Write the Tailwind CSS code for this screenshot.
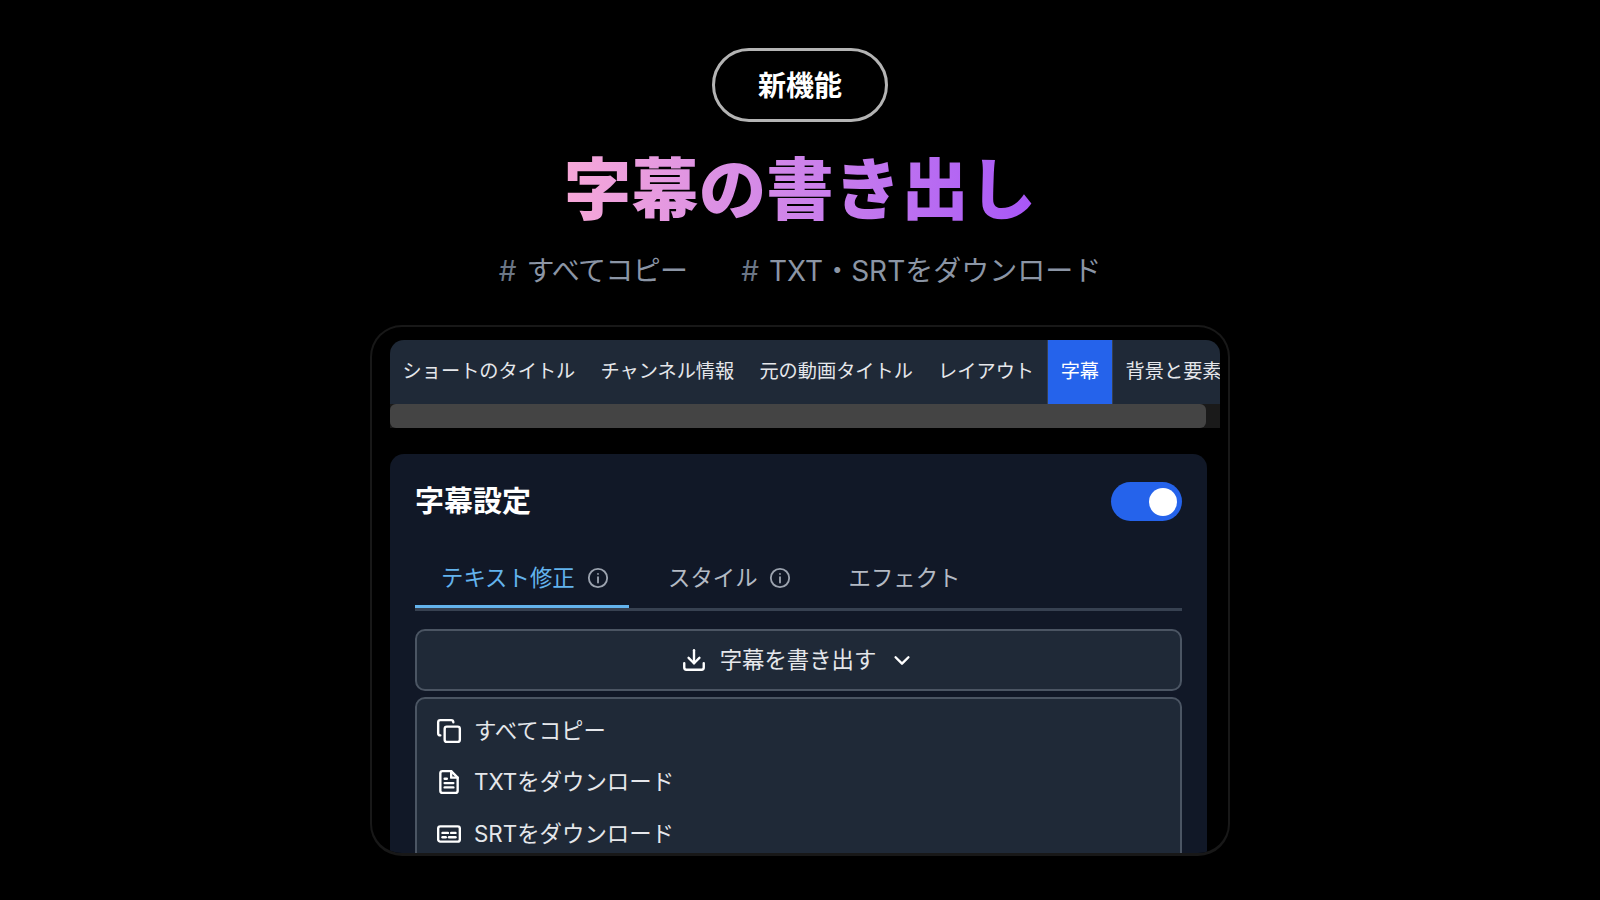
<!DOCTYPE html>
<html lang="ja">
<head>
    <meta charset="UTF-8">
    <title>字幕の書き出し</title>
    <script src="https://cdn.jsdelivr.net/npm/@tailwindcss/browser@4"></script>
</head>
<body class="bg-black">
    <div class="h-[900px] overflow-hidden flex flex-col items-center pt-[48px] font-['Inter','Noto_Sans_CJK_JP',sans-serif]">
        <!-- 見出し -->
        <div class="w-[176px] h-[74px] pt-[2px] rounded-full border-[3px] border-[#b4b4b4] flex items-center justify-center text-white text-[28px] font-bold">新機能</div>
        <h1 class="mt-[18px] h-[100px] leading-[100px] text-[67.5px] font-extrabold text-transparent bg-clip-text bg-gradient-to-r from-[#f7a8d8] to-[#a855f7]">字幕の書き出し</h1>
        <div class="mt-[9px] h-[44px] flex items-center gap-[54px] text-[28px] text-[#8b95a5]">
            <span><span class="text-[#6b7686] mr-[10px]">#</span><span class="tracking-[-0.7px]">すべてコピー</span></span>
            <span><span class="text-[#6b7686] mr-[10px]">#</span>TXT・SRTをダウンロード</span>
        </div>

        <!-- 端末フレーム -->
        <div class="mt-[32px] w-[860px] h-[531px] shrink-0 overflow-hidden rounded-[32px] border-2 border-b-[3px] border-[#181818] pt-[13px] pl-[18px] pr-[8px]">
            <div class="h-[64px] bg-[#1f2937] rounded-t-[14px] overflow-hidden flex text-[19.2px] text-[#e5e7eb] whitespace-nowrap">
                <div class="px-[12.6px] pb-[2px] flex items-center">ショートのタイトル</div>
                <div class="px-[12.6px] pb-[2px] flex items-center">チャンネル情報</div>
                <div class="px-[12.6px] pb-[2px] flex items-center">元の動画タイトル</div>
                <div class="px-[12.6px] pb-[2px] flex items-center">レイアウト</div>
                <div class="px-[13px] pb-[2px] flex items-center bg-[#2563eb] text-white border-x border-[#374151]">字幕</div>
                <div class="px-[12.6px] pb-[2px] flex items-center">背景と要素</div>
            </div>
            <div class="h-[24px] bg-[#1a1a1a]">
                <div class="w-[816px] h-full bg-[#444444] rounded-[6px]"></div>
            </div>

            <!-- 字幕設定カード -->
            <div class="mt-[26px] w-[817px] h-[500px] bg-[#111827] rounded-[14px] px-[25px] pt-[28px]">
                <div class="flex items-center justify-between h-[39px]">
                    <h2 class="text-[29px] font-bold text-white">字幕設定</h2>
                    <div class="w-[71px] h-[39px] rounded-full bg-[#2563eb] flex items-center justify-end pr-[5px]">
                        <div class="w-[28px] h-[28px] rounded-full bg-white"></div>
                    </div>
                </div>

                <div class="mt-[24px] h-[66px] flex items-stretch border-b-[3px] border-[#374151] text-[22.4px] text-[#b4bac4]">
                    <div class="w-[214px] pl-[26px] pt-[5px] flex items-center gap-[12px] border-b-[3px] border-[#63b3ed] text-[#63b3ed]">
                        <span>テキスト修正</span>
                        <svg class="w-[22px] h-[22px] text-[#9ca3af]" viewBox="0 0 24 24" fill="none" stroke="currentColor" stroke-width="2" stroke-linecap="round"><circle cx="12" cy="12" r="10"/><path d="M12 11v6"/><path d="M12 7.5v.01"/></svg>
                    </div>
                    <div class="ml-[39px] flex items-center gap-[11px] pt-[5px] pb-[3px]">
                        <span>スタイル</span>
                        <svg class="w-[22px] h-[22px] text-[#9ca3af]" viewBox="0 0 24 24" fill="none" stroke="currentColor" stroke-width="2" stroke-linecap="round"><circle cx="12" cy="12" r="10"/><path d="M12 11v6"/><path d="M12 7.5v.01"/></svg>
                    </div>
                    <div class="ml-[58px] flex items-center pt-[5px] pb-[3px]">エフェクト</div>
                </div>

                <div class="mt-[18px] h-[62px] pr-[3px] bg-[#1f2937] border-2 border-[#4b5563] rounded-[10px] flex items-center justify-center text-[22.4px] text-[#e5e7eb]">
                    <svg class="w-[26px] h-[26px] text-white mr-[13px]" viewBox="0 0 24 24" fill="none" stroke="currentColor" stroke-width="2.2" stroke-linecap="round" stroke-linejoin="round"><path d="M12 3v12"/><path d="M7 10l5 5 5-5"/><path d="M3 15v4a2 2 0 0 0 2 2h14a2 2 0 0 0 2-2v-4"/></svg>
                    <span>字幕を書き出す</span>
                    <svg class="w-[22px] h-[22px] text-white ml-[15px]" viewBox="0 0 24 24" fill="none" stroke="currentColor" stroke-width="2.6" stroke-linecap="round" stroke-linejoin="round"><path d="M5 9l7 7 7-7"/></svg>
                </div>

                <div class="mt-[6px] h-[300px] bg-[#1f2937] border-2 border-[#4b5563] rounded-[10px] pt-[6px] pl-[19px] text-[22.4px] text-[#e5e7eb]">
                    <div class="h-[51.5px] flex items-center gap-[12px]">
                        <svg class="w-[26px] h-[26px] text-white" viewBox="0 0 24 24" fill="none" stroke="currentColor" stroke-width="2.2" stroke-linecap="round" stroke-linejoin="round"><rect x="8" y="8" width="14" height="14" rx="2"/><path d="M4 16c-1.1 0-2-.9-2-2V4c0-1.1.9-2 2-2h10c1.1 0 2 .9 2 2"/></svg>
                        <span>すべてコピー</span>
                    </div>
                    <div class="h-[51.5px] flex items-center gap-[12px]">
                        <svg class="w-[26px] h-[26px] text-white" viewBox="0 0 24 24" fill="none" stroke="currentColor" stroke-width="2.2" stroke-linecap="round" stroke-linejoin="round"><path d="M14 2H6a2 2 0 0 0-2 2v16a2 2 0 0 0 2 2h12a2 2 0 0 0 2-2V8z"/><path d="M14 2v6h6"/><path d="M8 9h2"/><path d="M8 13h8"/><path d="M8 17h8"/></svg>
                        <span>TXTをダウンロード</span>
                    </div>
                    <div class="h-[51.5px] flex items-center gap-[12px]">
                        <svg class="w-[26px] h-[26px] text-white" viewBox="0 0 24 24" fill="none" stroke="currentColor" stroke-width="2.2" stroke-linecap="round" stroke-linejoin="round"><rect x="2" y="5" width="20" height="14" rx="2"/><path d="M6 11h5"/><path d="M14 11h4"/><path d="M6 15h3"/><path d="M12 15h6"/></svg>
                        <span>SRTをダウンロード</span>
                    </div>
                </div>
            </div>
        </div>
    </div>
</body>
</html>
